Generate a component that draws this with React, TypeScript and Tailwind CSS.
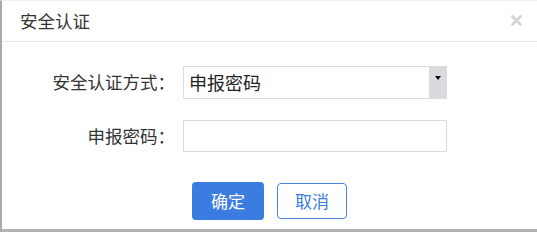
import React from "react";

const font = { fontFamily: '"Noto Sans CJK SC", "Noto Sans", sans-serif' };

export default function App() {
  return (
    <div
      className="w-[537px] h-[232px] bg-white border-l-2 border-l-[#a9a9a9] border-b-[3px] border-b-[#b3b3b3] border-t border-t-[#eeeeee] flex flex-col text-[#333]"
      style={font}
    >
      <div className="h-[41px] flex items-center justify-between pl-[18px] pr-[15px] border-b border-[#e6e6e6]">
        <span className="text-[17.5px]">安全认证</span>
        <svg width="11" height="11" viewBox="0 0 11 11" className="mt-[-1px]">
          <path d="M1.5 1.5 L9.5 9.5 M9.5 1.5 L1.5 9.5" stroke="#d2d2d2" strokeWidth="2.6" strokeLinecap="round" />
        </svg>
      </div>
      <div className="flex flex-col pt-[24px] gap-[21px]">
        <div className="flex items-center">
          <label className="w-[173px] text-right text-[17.5px]">安全认证方式：</label>
          <div className="ml-[8px] w-[264px] h-[33px] border border-[#dcdcdc] flex items-stretch">
            <span className="flex-1 flex items-center pl-[5px] text-[18px] text-[#222]">申报密码</span>
            <span className="w-[17px] bg-[#d8dadd] flex justify-center pt-[9px]">
              <span className="w-0 h-0 border-l-[3px] border-r-[3px] border-t-[4px] border-l-transparent border-r-transparent border-t-black" />
            </span>
          </div>
        </div>
        <div className="flex items-center">
          <label className="w-[173px] text-right text-[17.5px]">申报密码：</label>
          <input className="ml-[8px] w-[264px] h-[32px] border border-[#d9d9d9] outline-none" />
        </div>
      </div>
      <div className="flex gap-[13px] pl-[190px] mt-[30px]">
        <button className="w-[72px] h-[38px] rounded-[4px] bg-[#3a7ce0] text-white text-[17px]">确定</button>
        <button className="w-[70px] h-[36px] mt-[1px] rounded-[4px] border border-[#4a86e0] bg-white text-[#3a7ce0] text-[17px]">取消</button>
      </div>
    </div>
  );
}
